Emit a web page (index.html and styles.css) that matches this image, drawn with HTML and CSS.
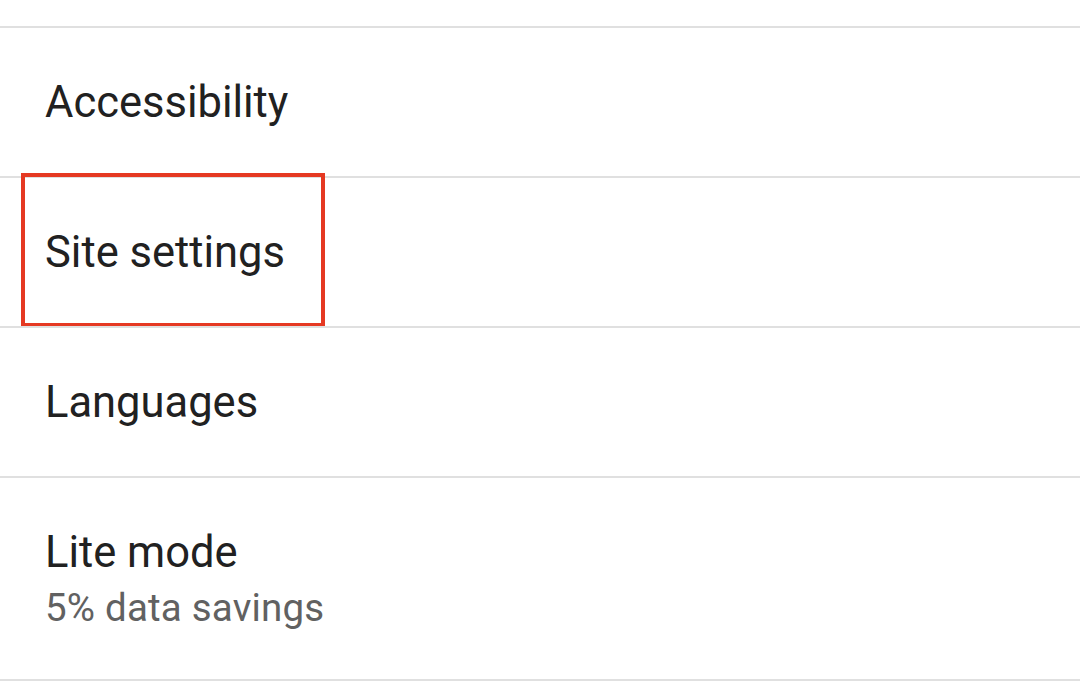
FILE: index.html
```html
<!DOCTYPE html>
<html>
<head>
<meta charset="utf-8">
<link rel="stylesheet" href="styles.css">
</head>
<body>
<div class="top-gap"></div>
<ul class="settings">
  <li class="row"><span class="title">Accessibility</span></li>
  <li class="row highlighted"><span class="title">Site settings</span><span class="callout"></span></li>
  <li class="row"><span class="title">Languages</span></li>
  <li class="row two-line"><span class="title">Lite mode</span><span class="summary">5% data savings</span></li>
</ul>
</body>
</html>
```
FILE: styles.css
```css
html, body {
  margin: 0;
  padding: 0;
  background: #ffffff;
}
body {
  font-family: Roboto, "Noto Sans", sans-serif;
  width: 1080px;
  height: 693px;
  overflow: hidden;
}
.top-gap {
  height: 26px;
}
.settings {
  list-style: none;
  margin: 0;
  padding: 0;
}
.row {
  position: relative;
  display: flex;
  flex-direction: column;
  border-top: 2px solid #e0e0e0;
  padding: 49px 0 47px 45px;
}
.row:last-child {
  border-bottom: 2px solid #e0e0e0;
}
.title {
  font-size: 43.5px;
  line-height: 52px;
  color: #212121;
}
.summary {
  font-size: 38.5px;
  line-height: 58px;
  letter-spacing: 0.2px;
  color: #616161;
}
.two-line {
  padding-bottom: 42px;
}
.callout {
  position: absolute;
  box-sizing: border-box;
  left: 21px;
  top: -5px;
  width: 304px;
  height: 154px;
  border: 4px solid #e53922;
}
```
